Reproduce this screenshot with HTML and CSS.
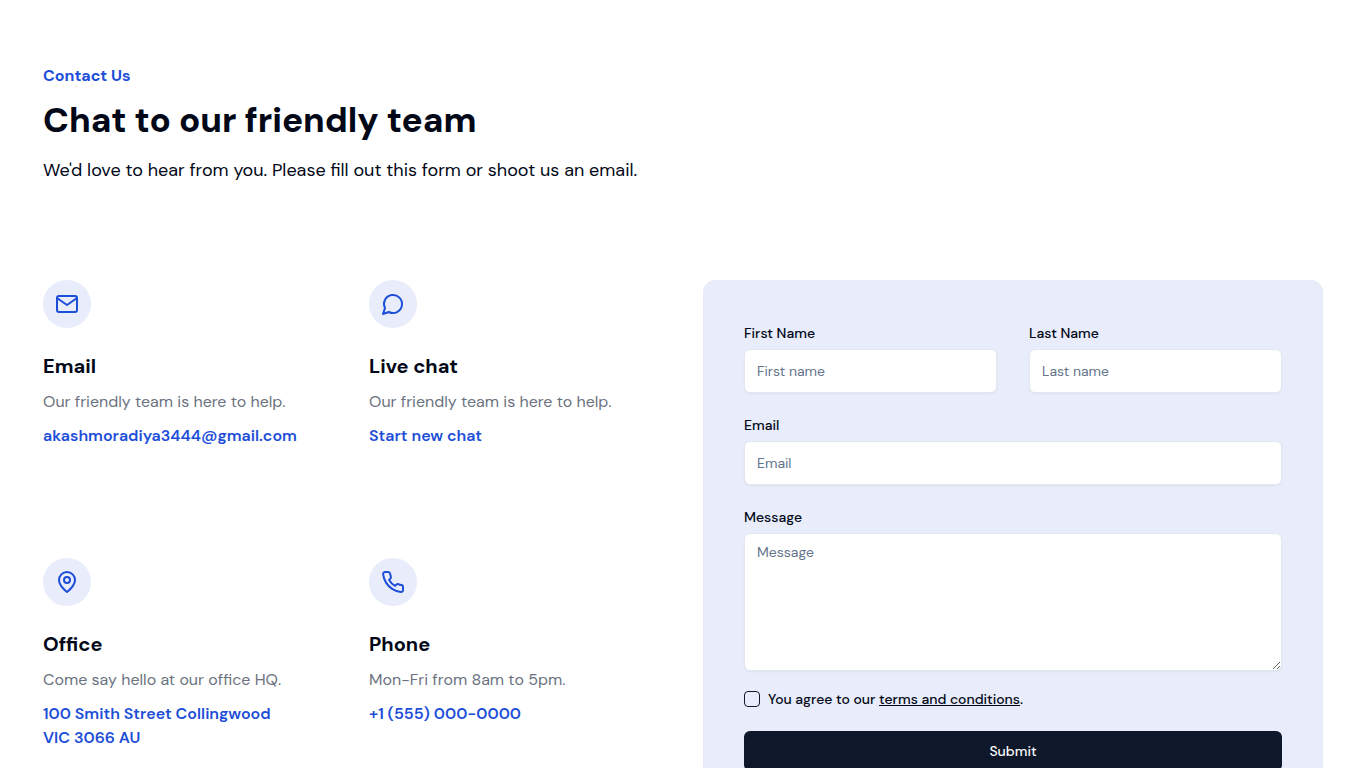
FILE: index.html
```html
<!DOCTYPE html>
<html lang="en">
<head>
<meta charset="utf-8">
<meta name="viewport" content="width=device-width, initial-scale=1">
<title>Contact Us</title>
<link rel="stylesheet" href="styles.css">
</head>
<body>
<main class="contact">
  <header class="intro">
    <p class="eyebrow">Contact Us</p>
    <h1 class="title">Chat to our friendly team</h1>
    <p class="lead">We'd love to hear from you. Please fill out this form or shoot us an email.</p>
  </header>
  <div class="columns">
    <div class="channels">
      <section class="channel">
        <div class="badge"><svg class="icon" viewBox="0 0 24 24" aria-hidden="true"><path d="M4 4h16c1.1 0 2 .9 2 2v12c0 1.1-.9 2-2 2H4c-1.1 0-2-.9-2-2V6c0-1.1.9-2 2-2z"/><path d="m22 6-10 7L2 6"/></svg></div>
        <h2 class="name">Email</h2>
        <p class="note">Our friendly team is here to help.</p>
        <a class="link" href="mailto:akashmoradiya3444@gmail.com">akashmoradiya3444@gmail.com</a>
      </section>
      <section class="channel">
        <div class="badge"><svg class="icon" viewBox="0 0 24 24" aria-hidden="true"><path d="M7.9 20A9 9 0 1 0 4 16.1L2 22Z"/></svg></div>
        <h2 class="name">Live chat</h2>
        <p class="note">Our friendly team is here to help.</p>
        <a class="link" href="#">Start new chat</a>
      </section>
      <section class="channel">
        <div class="badge"><svg class="icon" viewBox="0 0 24 24" aria-hidden="true"><path d="M20 10c0 6-8 12-8 12s-8-6-8-12a8 8 0 0 1 16 0Z"/><circle cx="12" cy="10" r="3"/></svg></div>
        <h2 class="name">Office</h2>
        <p class="note">Come say hello at our office HQ.</p>
        <a class="link" href="#">100 Smith Street Collingwood<br>VIC 3066 AU</a>
      </section>
      <section class="channel">
        <div class="badge"><svg class="icon" viewBox="0 0 24 24" aria-hidden="true"><path d="M22 16.92v3a2 2 0 0 1-2.18 2 19.79 19.79 0 0 1-8.63-3.07 19.5 19.5 0 0 1-6-6 19.79 19.79 0 0 1-3.07-8.67A2 2 0 0 1 4.11 2h3a2 2 0 0 1 2 1.72 12.84 12.84 0 0 0 .7 2.81 2 2 0 0 1-.45 2.11L8.09 9.91a16 16 0 0 0 6 6l1.27-1.27a2 2 0 0 1 2.11-.45 12.84 12.84 0 0 0 2.81.7A2 2 0 0 1 22 16.92z"/></svg></div>
        <h2 class="name">Phone</h2>
        <p class="note">Mon-Fri from 8am to 5pm.</p>
        <a class="link" href="tel:+15550000000">+1 (555) 000-0000</a>
      </section>
    </div>
    <form class="form">
      <div class="pair">
        <div class="field">
          <label class="label" for="first">First Name</label>
          <input class="control" id="first" type="text" placeholder="First name">
        </div>
        <div class="field">
          <label class="label" for="last">Last Name</label>
          <input class="control" id="last" type="text" placeholder="Last name">
        </div>
      </div>
      <div class="field">
        <label class="label" for="email">Email</label>
        <input class="control" id="email" type="email" placeholder="Email">
      </div>
      <div class="field">
        <label class="label" for="message">Message</label>
        <textarea class="control area" id="message" rows="6" placeholder="Message"></textarea>
      </div>
      <div class="agree">
        <input class="tick" id="terms" type="checkbox">
        <label class="terms" for="terms">You agree to our <a class="terms-link" href="#">terms and conditions</a>.</label>
      </div>
      <button class="submit" type="submit">Submit</button>
    </form>
  </div>
</main>
</body>
</html>
```
FILE: styles.css
```css
*, *::before, *::after { box-sizing: border-box; }
body {
  margin: 0;
  background: #fff;
  color: #020817;
  font-family: "DM Sans", Inter, "Liberation Sans", sans-serif;
  font-size: 16px;
  line-height: 24px;
}
h1, h2, p { margin: 0; }
.contact { max-width: 1280px; margin: 0 auto; padding: 64px 0; }
.intro { display: flex; flex-direction: column; }
.eyebrow { color: #1d4ed8; font-weight: 700; }
.title { margin-top: 12px; font-size: 35px; line-height: 40px; font-weight: 800; }
.lead { margin-top: 16px; font-size: 18px; line-height: 28px; }
.columns {
  display: grid;
  grid-template-columns: repeat(2, minmax(0, 1fr));
  gap: 40px;
  margin-top: 96px;
}
.channels {
  display: grid;
  grid-template-columns: repeat(2, minmax(0, 1fr));
  gap: 48px 32px;
}
.channel { display: flex; flex-direction: column; align-items: flex-start; }
.badge {
  display: grid;
  place-items: center;
  width: 48px;
  height: 48px;
  border-radius: 50%;
  background: #e8ecfb;
}
.icon {
  width: 24px;
  height: 24px;
  fill: none;
  stroke: #1d4ed8;
  stroke-width: 2;
  stroke-linecap: round;
  stroke-linejoin: round;
}
.name { margin-top: 24px; font-size: 20px; line-height: 28px; font-weight: 700; }
.note { margin-top: 10px; color: #6b7280; }
.link { margin-top: 10px; color: #1d4ed8; font-weight: 600; text-decoration: none; }
.form {
  display: flex;
  flex-direction: column;
  gap: 20px;
  padding: 40px;
  border: 1px solid #e6eaf9;
  border-radius: 12px;
  background: #e8ecfb;
  font-size: 14px;
}
.pair { display: grid; grid-template-columns: repeat(2, minmax(0, 1fr)); gap: 32px; }
.field { display: flex; flex-direction: column; gap: 4px; }
.label { font-weight: 500; }
.control {
  width: 100%;
  height: 44px;
  padding: 8px 12px;
  border: 1px solid #e2e8f0;
  border-radius: 6px;
  background: #fff;
  box-shadow: 0 1px 2px rgba(0, 0, 0, 0.05);
  color: #020817;
  font: inherit;
  line-height: 20px;
}
.control::placeholder { color: #64748b; opacity: 1; }
.area { height: 138px; resize: vertical; }
.agree { display: flex; align-items: center; gap: 8px; margin-bottom: 4px; }
.tick {
  appearance: none;
  width: 16px;
  height: 16px;
  margin: 0;
  border: 1px solid #0f172a;
  border-radius: 4px;
}
.tick:checked { background: #0f172a; }
.terms { line-height: 16px; font-weight: 500; }
.terms-link { color: inherit; text-decoration: underline; }
.submit {
  height: 40px;
  border: 0;
  border-radius: 6px;
  background: #0f172a;
  color: #f8fafc;
  font: inherit;
  font-weight: 500;
}
@media (max-width: 900px) {
  .contact { padding: 64px 24px; }
  .columns { grid-template-columns: minmax(0, 1fr); }
}
```
